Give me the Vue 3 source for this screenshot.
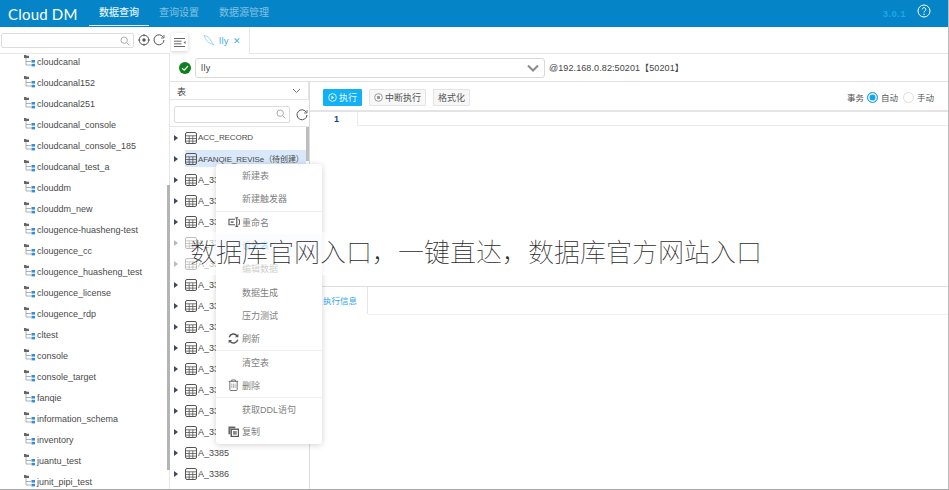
<template>
  <div class="page">
    <header class="top">
      <div class="logo">Cloud DM</div>
      <nav class="nav">
        <a class="nav-item active">数据查询</a>
        <a class="nav-item">查询设置</a>
        <a class="nav-item">数据源管理</a>
      </nav>
      <span class="version">3.0.1</span>
      <svg class="help" width="14" height="14" viewBox="0 0 14 14">
        <circle cx="7" cy="7" r="6" fill="none" stroke="#fff" stroke-width="1" />
        <path d="M5.2 5.4a1.8 1.8 0 1 1 2.7 1.6c-.6.3-.9.7-.9 1.4" fill="none" stroke="#fff" stroke-width="1" />
        <circle cx="7" cy="10.2" r=".7" fill="#fff" />
      </svg>
    </header>

    <div class="main">
      <aside class="tree">
        <div class="tree-search">
          <div class="search-box">
            <svg class="search-icon" width="10" height="10" viewBox="0 0 10 10">
              <circle cx="4.2" cy="4.2" r="3.2" fill="none" stroke="#aaa" stroke-width="1" />
              <path d="M6.6 6.6 9.4 9.4" stroke="#aaa" stroke-width="1" />
            </svg>
          </div>
          <svg class="tool" width="12" height="12" viewBox="0 0 12 12">
            <circle cx="6" cy="6" r="4.8" fill="none" stroke="#555" stroke-width="1" />
            <circle cx="6" cy="6" r="1.7" fill="#555" />
            <path d="M6 0v2.4M6 9.6V12M0 6h2.4M9.6 6H12" stroke="#555" stroke-width=".8" />
          </svg>
          <svg class="tool" width="12" height="12" viewBox="0 0 12 12">
            <path d="M10.4 3.4A5 5 0 1 0 11 6" fill="none" stroke="#555" stroke-width="1" />
            <path d="M11 1v3H8" fill="none" stroke="#555" stroke-width=".8" />
          </svg>
        </div>
        <div class="tree-list">
          <div v-for="name in schemas" :key="name" class="tree-row">
            <svg width="12" height="12" viewBox="0 0 12 12">
              <path d="M0 0h2l.7.8H5v2.2H0z" fill="#666" />
              <path d="M2 3v7h5M2 6.5h5" fill="none" stroke="#999" stroke-width=".8" />
              <rect x="7.5" y="5" width="3.5" height="2.6" fill="#2f8fe6" />
              <rect x="7.5" y="8.8" width="3.5" height="2.6" fill="#2f8fe6" />
            </svg>
            <span>{{ name }}</span>
          </div>
        </div>
        <div class="tree-thumb"></div>
      </aside>

      <section class="work">
        <div class="tabs">
          <div class="toggle">
            <svg width="12" height="9" viewBox="0 0 12 9">
              <path d="M0 .5h11M0 3.2h7.5M0 5.8h7.5M0 8.5h11" stroke="#666" stroke-width="1" />
              <path d="M11.5 3 9.5 4.5l2 1.5z" fill="#666" />
            </svg>
          </div>
          <div class="tab">
            <svg width="13" height="13" viewBox="0 0 13 13">
              <path d="M1 1.5c3 .3 6 2.4 7.2 5.6.5 1.3 1.3 2.4 3 3.9-2-.4-3.3-1-4.3-2-2.100-.4-4-3-5.900-7.500z" fill="none" stroke="#8cc6ee" stroke-width=".8" />
            </svg>
            <span class="tab-name">lly</span>
            <span class="tab-x">✕</span>
          </div>
          <div class="tabs-rest"></div>
        </div>

        <div class="db-row">
          <span class="ok">
            <svg width="8" height="8" viewBox="0 0 8 8">
              <path d="M1 4.2 3.2 6.2 7 2" fill="none" stroke="#fff" stroke-width="1.2" />
            </svg>
          </span>
          <div class="db-select">
            <span>lly</span>
            <svg width="12" height="8" viewBox="0 0 12 8">
              <path d="M1 1.5 6 6.5 11 1.500" fill="none" stroke="#8a8a8a" stroke-width="2" />
            </svg>
          </div>
          <span class="db-addr">@192.168.0.82:50201【50201】</span>
        </div>

        <div class="split">
          <div class="objects">
            <div class="obj-type">
              <span>表</span>
              <svg width="9" height="6" viewBox="0 0 9 6">
                <path d="M1 1 4.5 4.5 8 1" fill="none" stroke="#777" stroke-width="1" />
              </svg>
            </div>
            <div class="obj-search">
              <div class="search-box">
                <svg class="search-icon" width="10" height="10" viewBox="0 0 10 10">
                  <circle cx="4.2" cy="4.2" r="3.2" fill="none" stroke="#aaa" stroke-width="1" />
                  <path d="M6.6 6.6 9.4 9.4" stroke="#aaa" stroke-width="1" />
                </svg>
              </div>
              <svg class="tool" width="12" height="12" viewBox="0 0 12 12">
                <path d="M10.4 3.4A5 5 0 1 0 11 6" fill="none" stroke="#555" stroke-width="1" />
                <path d="M11 1v3H8" fill="none" stroke="#555" stroke-width=".8" />
              </svg>
            </div>
            <div class="obj-list">
              <div v-for="(t, i) in tables" :key="t" class="obj-row">
                <i class="arrow"></i>
                <div class="obj-name" :class="{ picked: i === 1, caps: i < 2 }">
                  <svg width="12" height="12" viewBox="0 0 12 12">
                    <rect x=".5" y=".5" width="11" height="11" rx="1.5" fill="none" stroke="#555" stroke-width="1" />
                    <path d="M.5 3.8h11M.5 6.5h11M.5 9.1h11M4.2 3.8v7.7M7.8 3.8v7.7" stroke="#555" stroke-width=".8" />
                  </svg>
                  <span>{{ t }}</span>
                </div>
              </div>
            </div>
            <div class="obj-thumb"></div>
          </div>

          <div class="editor">
            <div class="toolbar">
              <button class="btn primary">
                <svg width="9" height="9" viewBox="0 0 10 10">
                  <circle cx="5" cy="5" r="4.3" fill="none" stroke="#fff" stroke-width=".9" />
                  <path d="M3.9 3.1 6.8 5 3.9 6.9z" fill="#fff" />
                </svg>
                执行
              </button>
              <button class="btn">
                <svg width="9" height="9" viewBox="0 0 10 10">
                  <circle cx="5" cy="5" r="4.3" fill="none" stroke="#888" stroke-width=".9" />
                  <rect x="3.5" y="3.5" width="3" height="3" fill="#888" />
                </svg>
                中断执行
              </button>
              <button class="btn">格式化</button>
              <div class="tx">
                <span>事务</span>
                <i class="radio on"></i>
                <span>自动</span>
                <i class="radio"></i>
                <span>手动</span>
              </div>
            </div>
            <div class="code">
              <div class="gutter">1</div>
              <div class="active-line"></div>
            </div>
            <div class="result">
              <div class="result-tab">执行信息</div>
              <div class="result-rest"></div>
            </div>
          </div>
        </div>
      </section>
    </div>

    <ul class="menu">
      <li v-for="m in menu" :key="m.text" class="menu-item" :class="{ sep: m.sep, hover: m.hover }">
        <span class="menu-icon">
          <svg v-if="m.icon === 'rename'" width="12" height="11" viewBox="0 0 13 12">
            <path d="M7.5 2.5H1v6h6.5" fill="none" stroke="#555" stroke-width="1.2" />
            <path d="M3 4.800h3v1.500H3z" fill="#555" />
            <path d="M8 .8h3M8 10.2h3M9.500 .8v9.400" fill="none" stroke="#555" stroke-width="1.2" />
            <path d="M11 3h1.500v5H11" fill="none" stroke="#555" stroke-width="1" />
          </svg>
          <svg v-else-if="m.icon === 'refresh'" width="11" height="11" viewBox="0 0 12 12">
            <path d="M1.3 4.6A4.8 4.8 0 0 1 9.800 3" fill="none" stroke="#555" stroke-width="1.5" />
            <path d="M10.700 7.400A4.800 4.800 0 0 1 2.200 9" fill="none" stroke="#555" stroke-width="1.5" />
            <path d="M11.300 .8v3.700H7.600zM.7 11.200V7.500h3.700z" fill="#555" />
          </svg>
          <svg v-else-if="m.icon === 'trash'" width="11" height="12" viewBox="0 0 12 13">
            <path d="M.8 2.500h10.400M4 2.500V1h4v1.500" fill="none" stroke="#666" stroke-width="1" />
            <path d="M2 2.500v9.200c0 .5.300.8.800.8h6.400c.5 0 .8-.3.800-.8V2.500" fill="none" stroke="#666" stroke-width="1" />
            <path d="M4.200 5v5M6 5v5M7.800 5v5" stroke="#999" stroke-width=".8" />
          </svg>
          <svg v-else-if="m.icon === 'copy'" width="11" height="11" viewBox="0 0 12 12">
            <path d="M.5.500h7.500v2H2.500V9H.5z" fill="#666" />
            <rect x="3.500" y="3.500" width="8" height="8" fill="none" stroke="#555" stroke-width="1.500" />
            <rect x="5.500" y="5.500" width="4" height="4" fill="#888" />
          </svg>
        </span>
        <span>{{ m.text }}</span>
      </li>
    </ul>

    <div class="banner">数据库官网入口，一键直达，数据库官方网站入口</div>
  </div>
</template>

<script setup>
const schemas = [
  'cloudcanal',
  'cloudcanal152',
  'cloudcanal251',
  'cloudcanal_console',
  'cloudcanal_console_185',
  'cloudcanal_test_a',
  'clouddm',
  'clouddm_new',
  'clougence-huasheng-test',
  'clougence_cc',
  'clougence_huasheng_test',
  'clougence_license',
  'clougence_rdp',
  'cltest',
  'console',
  'console_target',
  'fanqie',
  'information_schema',
  'inventory',
  'juantu_test',
  'junit_pipi_test'
]

const tables = [
  'ACC_RECORD',
  'AFANQIE_REVISe（待创建）',
  'A_3370', 'A_3371', 'A_3372', 'A_3373', 'A_3374', 'A_3375', 'A_3376',
  'A_3377', 'A_3378', 'A_3379', 'A_3380', 'A_3381', 'A_3382',
  'A_3385',
  'A_3386'
]

const menu = [
  { text: '新建表' },
  { text: '新建触发器' },
  { text: '重命名', icon: 'rename', sep: true },
  { text: '设计表', hover: true },
  { text: '编辑数据' },
  { text: '数据生成' },
  { text: '压力测试' },
  { text: '刷新', icon: 'refresh' },
  { text: '清空表', sep: true },
  { text: '删除', icon: 'trash' },
  { text: '获取DDL语句', sep: true },
  { text: '复制', icon: 'copy' }
]
</script>

<style>
html, body {
  margin: 0;
  padding: 0;
  background: #fff;
}
</style>

<style scoped>
.page {
  position: relative;
  width: 949px;
  height: 490px;
  overflow: hidden;
  display: flex;
  flex-direction: column;
  box-sizing: border-box;
  border-right: 1px solid #bbb;
  border-bottom: 1px solid #aaa;
  font-family: "Liberation Sans", "Noto Sans CJK SC", sans-serif;
  font-size: 9px;
  color: #444;
  background: #fff;
}

.top {
  flex: none;
  height: 27px;
  display: flex;
  align-items: center;
  background: #0585c7;
  color: #fff;
}

.logo {
  width: 89px;
  padding-left: 8px;
  box-sizing: border-box;
  font-family: Lato, sans-serif;
  font-size: 15px;
  font-weight: 400;
  letter-spacing: .2px;
}

.nav {
  display: flex;
  height: 27px;
}

.nav-item {
  padding: 0 10px;
  line-height: 26px;
  font-size: 10px;
  color: rgba(255, 255, 255, .5);
}

.nav-item.active {
  color: #e4f2fa;
  font-weight: 500;
  box-shadow: inset 0 -1px 0 #dff0fa;
  height: 26px;
}

.version {
  margin-left: auto;
  font-size: 9px;
  font-weight: 700;
  letter-spacing: .6px;
  color: #18aaf0;
}

.help {
  margin: 0 17px 0 11px;
  position: relative;
  top: -3px;
}

.main {
  flex: 1;
  min-height: 0;
  display: flex;
}

.tree {
  position: relative;
  flex: none;
  width: 170px;
  box-sizing: border-box;
  overflow: hidden;
  box-shadow: inset -1px 0 #e6e6e6;
}

.tree-search {
  position: relative;
  z-index: 1;
  height: 27px;
  box-sizing: border-box;
  display: flex;
  align-items: center;
  gap: 3px;
  padding: 0 1px;
  border-bottom: 1px solid #e6e6e6;
  background: #fff;
}

.search-box {
  position: relative;
  width: 133px;
  height: 15px;
  box-sizing: border-box;
  border: 1px solid #ddd;
  border-radius: 2px;
  margin-right: 1px;
}

.search-icon {
  position: absolute;
  right: 3px;
  top: 2px;
}

.tool {
  flex: none;
}

.tree-list {
  padding-left: 24px;
  margin-top: -3px;
}

.tree-row {
  height: 21px;
  display: flex;
  align-items: center;
  gap: 1px;
  white-space: nowrap;
  color: #4a4a4a;
}

.tree-row svg {
  flex: none;
  position: relative;
  top: -1px;
}

.tree-thumb {
  position: absolute;
  right: 0;
  top: 158px;
  width: 3px;
  height: 285px;
  background: #b4b4b4;
}

.work {
  flex: 1;
  min-width: 0;
  display: flex;
  flex-direction: column;
}

.tabs {
  flex: none;
  height: 27px;
  display: flex;
}

.toggle {
  flex: none;
  width: 17px;
  height: 18px;
  margin: 6px 2px 0 1px;
  display: flex;
  align-items: center;
  justify-content: center;
  background: #fff;
  box-shadow: 0 1px 4px rgba(0, 0, 0, .18);
}

.tab {
  flex: none;
  width: 60px;
  box-sizing: border-box;
  display: flex;
  align-items: center;
  gap: 3px;
  padding-left: 13px;
  border-right: 1px solid #e6e6e6;
  color: #3fb1f0;
}

.tab-name {
  font-size: 9.5px;
  letter-spacing: .3px;
}

.tab-x {
  font-size: 9px;
  margin-left: 1px;
}

.tabs-rest {
  flex: 1;
  border-bottom: 1px solid #e6e6e6;
}

.db-row {
  flex: none;
  height: 28px;
  box-sizing: border-box;
  display: flex;
  align-items: center;
  padding-left: 9px;
  border-bottom: 1px solid #e2e2e2;
}

.ok {
  flex: none;
  width: 12px;
  height: 12px;
  border-radius: 50%;
  background: #0f7f1c;
  display: flex;
  align-items: center;
  justify-content: center;
  margin-right: 4px;
}

.db-select {
  flex: none;
  width: 350px;
  height: 20px;
  box-sizing: border-box;
  display: flex;
  align-items: center;
  justify-content: space-between;
  padding: 0 5px;
  border: 1px solid #d9d9d9;
  border-radius: 3px;
  letter-spacing: .4px;
}

.db-addr {
  margin-left: 4px;
  letter-spacing: .1px;
  white-space: nowrap;
}

.split {
  flex: 1;
  min-height: 0;
  display: flex;
}

.objects {
  position: relative;
  flex: none;
  width: 140px;
  box-sizing: border-box;
  border-right: 1px solid #dcdcdc;
  overflow: hidden;
}

.obj-type {
  height: 18px;
  box-sizing: border-box;
  display: flex;
  align-items: center;
  justify-content: space-between;
  padding: 1px 7px 0 7px;
  border: 1px solid #e6e6e6;
  border-top: 0;
  border-left: 0;
}

.obj-search {
  height: 27px;
  box-sizing: border-box;
  display: flex;
  align-items: center;
  gap: 5px;
  padding: 3px 0 0 4px;
  border-bottom: 1px solid #e6e6e6;
}

.obj-search .search-box {
  width: 116px;
  height: 17px;
}

.obj-list {
  padding-left: 4px;
}

.obj-row {
  height: 21px;
  display: flex;
  align-items: center;
  gap: 7px;
}

.arrow {
  flex: none;
  width: 0;
  height: 0;
  border-left: 4px solid #3d4b5f;
  border-top: 3.5px solid transparent;
  border-bottom: 3.5px solid transparent;
}

.obj-name {
  flex: 1;
  height: 17px;
  display: flex;
  align-items: center;
  gap: 1px;
  white-space: nowrap;
  color: #4a4a4a;
  min-width: 0;
  overflow: hidden;
}

.obj-name.caps {
  font-size: 8px;
  letter-spacing: -.1px;
}

.obj-name svg {
  flex: none;
}

.obj-name.picked {
  background: #d9e9fb;
  margin-right: 3px;
}

.obj-thumb {
  position: absolute;
  right: 0;
  top: 45px;
  width: 3px;
  height: 34px;
  background: #bdbdbd;
}

.editor {
  flex: 1;
  min-width: 0;
  display: flex;
  flex-direction: column;
}

.toolbar {
  flex: none;
  height: 30px;
  box-sizing: border-box;
  display: flex;
  align-items: center;
  gap: 7px;
  padding: 2px 13px 0;
  border-bottom: 2px solid #e4e4e4;
}

.btn {
  height: 17px;
  display: flex;
  align-items: center;
  gap: 2px;
  padding: 0 4px;
  border: 1px solid #e4e4e4;
  border-radius: 1px;
  background: #f7f7f7;
  font: inherit;
  color: #555;
}

.btn.primary {
  background: #12b0f5;
  border-color: #12b0f5;
  color: #e8f8ff;
}

.tx {
  margin-left: auto;
  display: flex;
  align-items: center;
  gap: 3px;
  margin-right: 1px;
  font-size: 8.5px;
  color: #555;
}

.radio {
  width: 11px;
  height: 11px;
  box-sizing: border-box;
  border-radius: 50%;
  border: 1px solid #ddd;
  background: #fff;
}

.radio.on {
  border-color: #12a5ee;
  background: #12a5ee;
  box-shadow: inset 0 0 0 1.5px #fff;
}

.tx span:nth-of-type(2) {
  margin-right: 2px;
}

.code {
  flex: none;
  height: 174px;
  display: flex;
  align-items: flex-start;
}

.gutter {
  flex: none;
  width: 47px;
  height: 14px;
  line-height: 14px;
  box-sizing: border-box;
  padding-left: 24px;
  font-weight: 700;
  color: #1c3d8f;
}

.active-line {
  flex: 1;
  height: 14px;
  box-sizing: border-box;
  border: 1px solid #ececec;
  border-top: 0;
  border-right: 0;
}

.result {
  flex: 1;
  display: flex;
  align-items: flex-start;
  border-top: 1px solid #ddd;
}

.result-tab {
  flex: none;
  width: 58px;
  height: 27px;
  line-height: 29px;
  box-sizing: border-box;
  padding-left: 13px;
  font-size: 8.5px;
  color: #2da5f0;
  border-right: 1px solid #e6e6e6;
}

.result-rest {
  flex: 1;
  height: 27px;
  border-bottom: 1px solid #eee;
}

/* context menu floats over the table list */
.menu {
  position: absolute;
  left: 216px;
  top: 164px;
  width: 106px;
  margin: 0;
  padding: 0;
  list-style: none;
  background: #fff;
  border-radius: 3px;
  box-shadow: 0 1px 6px rgba(0, 0, 0, .18);
  color: #808080;
}

.menu-item {
  height: 23.3px;
  box-sizing: border-box;
  display: flex;
  align-items: center;
  padding-left: 12px;
}

.menu-item.sep {
  border-top: 1px solid #eee;
}

.menu-item.hover {
  background: #f2f8fe;
  color: #3fa5ee;
}

.menu-icon {
  flex: none;
  width: 14px;
  display: flex;
  align-items: center;
}

/* white band behind the headline */
.banner {
  position: absolute;
  left: 172px;
  right: 180px;
  top: 232px;
  height: 43px;
  line-height: 42px;
  padding-left: 18px;
  font-size: 26px;
  font-weight: 100;
  color: #2a2a2a;
  white-space: nowrap;
  background: rgba(255, 255, 255, .62);
}
</style>
